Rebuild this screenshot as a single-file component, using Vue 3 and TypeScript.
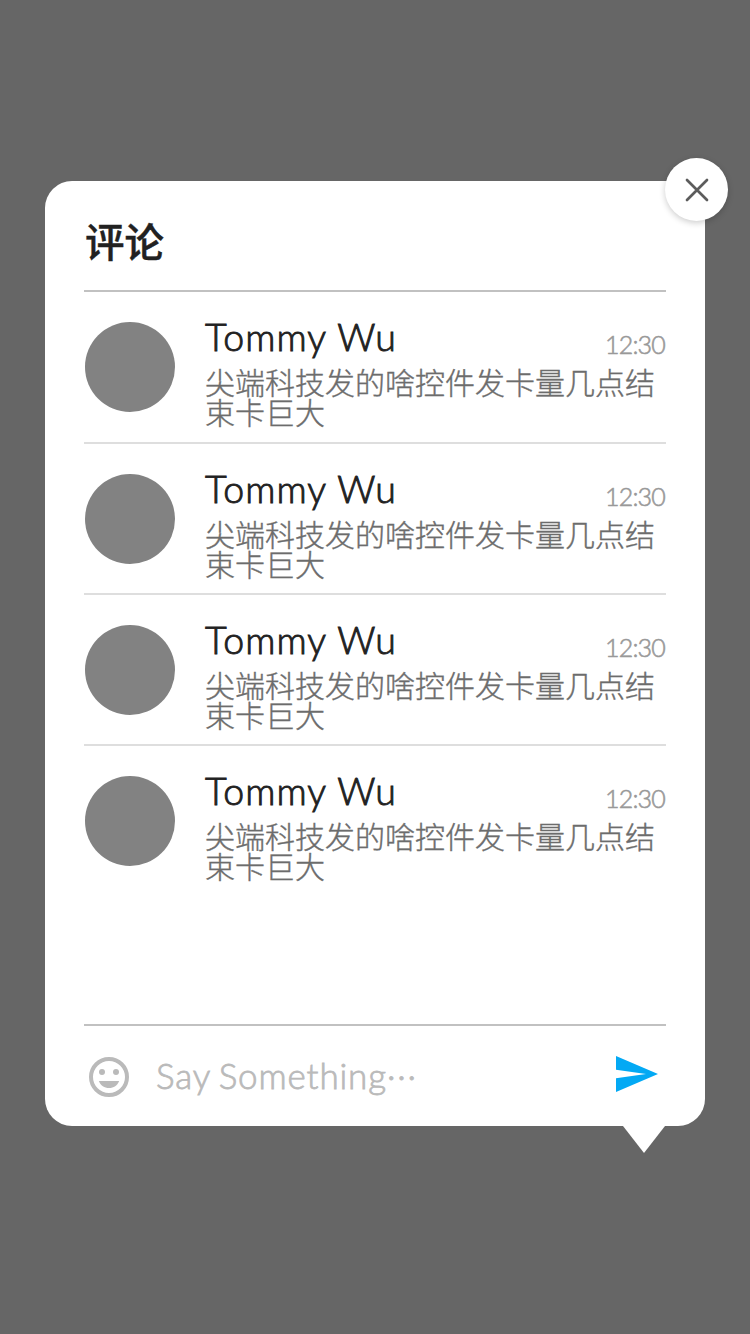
<script setup lang="ts">
interface Comment {
  id: number
  name: string
  time: string
  text: string
}

const comments: Comment[] = [1, 2, 3, 4].map((id) => ({
  id,
  name: 'Tommy Wu',
  time: '12:30',
  text: '尖端科技发的啥控件发卡量几点结束卡巨大',
}))
</script>

<template>
  <div class="overlay">
    <section class="card">
      <button class="close" aria-label="Close">
        <svg width="24" height="24" viewBox="0 0 24 24">
          <path d="M2 2L22 22M22 2L2 22" fill="none" stroke="#5c5c5c" stroke-width="2.7" stroke-linecap="round" />
        </svg>
      </button>
      <h1 class="title">评论</h1>
      <ul class="list">
        <li v-for="comment in comments" :key="comment.id" class="item">
          <span class="avatar"></span>
          <div class="body">
            <div class="meta">
              <span class="name">{{ comment.name }}</span>
              <span class="time">{{ comment.time }}</span>
            </div>
            <p class="text">{{ comment.text }}</p>
          </div>
        </li>
      </ul>
      <footer class="composer">
        <svg class="smile" width="40" height="40" viewBox="0 0 40 40">
          <circle cx="20" cy="20" r="18" fill="none" stroke="#bababa" stroke-width="4" />
          <circle cx="13" cy="15" r="3" fill="#bababa" />
          <circle cx="27" cy="15" r="3" fill="#bababa" />
          <path d="M9.8 24H30.2C28.5 28.4 24.6 31 20 31S11.5 28.4 9.8 24Z" fill="#bababa" />
        </svg>
        <span class="placeholder">Say Something<span class="dots">···</span></span>
        <svg class="send" width="42" height="36" viewBox="0 0 42 36">
          <path d="M0 0L42 18L0 36V22.3L30 18L0 13.7Z" fill="#03a9f4" />
        </svg>
      </footer>
      <svg class="tail" width="42" height="28" viewBox="0 0 42 28">
        <path d="M0 0H42V1L21 28L0 1Z" fill="#fff" />
      </svg>
    </section>
  </div>
</template>

<style>
body {
  margin: 0;
  background: #666;
}
</style>

<style scoped>
.overlay {
  box-sizing: border-box;
  width: 750px;
  height: 1334px;
  padding: 181px 45px 0;
  background: #666;
  font-family: Lato, 'Noto Sans CJK SC', sans-serif;
  font-variant-ligatures: none;
}
.card {
  position: relative;
  display: flex;
  flex-direction: column;
  box-sizing: border-box;
  width: 660px;
  height: 945px;
  padding: 0 39px;
  border-radius: 27px;
  background: #fff;
}
.close {
  position: absolute;
  top: -23px;
  right: -23px;
  display: flex;
  align-items: center;
  justify-content: center;
  width: 63px;
  height: 63px;
  padding: 0;
  border: 0;
  border-radius: 50%;
  background: #fff;
  box-shadow: 0 2px 6px rgba(0, 0, 0, 0.2);
}
.title {
  box-sizing: border-box;
  height: 111px;
  margin: 0;
  padding-left: 1px;
  border-bottom: 2px solid #c1c1c1;
  color: #212121;
  font-size: 39.5px;
  font-weight: 500;
  line-height: 121px;
  -webkit-text-stroke: 0.4px #212121;
}
.list {
  flex: 1;
  margin: 0;
  padding: 0;
  list-style: none;
}
.item {
  display: flex;
  box-sizing: border-box;
  height: 151px;
  padding: 30px 0 0 1px;
  border-bottom: 2px solid #dedede;
}
.item:first-child {
  height: 152px;
}
.item:last-child {
  border-bottom: 0;
}
.avatar {
  flex: none;
  width: 90px;
  height: 90px;
  border-radius: 50%;
  background: #828282;
}
.body {
  flex: 1;
  padding-left: 30px;
}
.meta {
  display: flex;
  align-items: flex-start;
  justify-content: space-between;
  height: 45px;
}
.name {
  color: #212121;
  font-size: 37.5px;
  font-weight: 300;
  letter-spacing: 1.1px;
  word-spacing: 0.5px;
  line-height: 29px;
  white-space: nowrap;
  -webkit-text-stroke: 0.9px #212121;
}
.time {
  margin: 7px 1px 0 0;
  color: #999;
  font-size: 25px;
  font-weight: 300;
  letter-spacing: -0.8px;
  line-height: 31px;
  -webkit-text-stroke: 0.6px #999;
}
.text {
  width: 456px;
  margin: 0;
  color: #6c6c6c;
  font-size: 30px;
  font-weight: 300;
  line-height: 30px;
  -webkit-text-stroke: 0.4px #6c6c6c;
}
.composer {
  display: flex;
  align-items: center;
  box-sizing: border-box;
  height: 102px;
  padding: 0 8px 0 5px;
  border-top: 2px solid #c1c1c1;
}
.smile {
  margin-top: 2px;
}
.placeholder {
  flex: 1;
  margin: -2px 0 0 27px;
  color: #bababa;
  font-size: 35px;
  font-weight: 300;
  letter-spacing: 0.85px;
  word-spacing: -2px;
  white-space: nowrap;
  -webkit-text-stroke: 0.8px #bababa;
}
.dots {
  letter-spacing: 1.8px;
}
.send {
  margin-top: -4px;
}
.tail {
  position: absolute;
  top: 944px;
  left: 577.5px;
}
</style>
